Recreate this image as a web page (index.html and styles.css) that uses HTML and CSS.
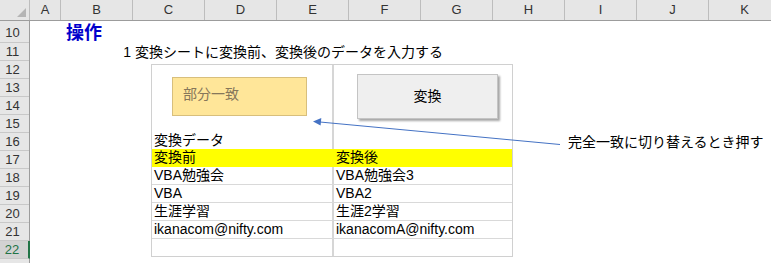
FILE: index.html
```html
<!DOCTYPE html>
<html lang="ja">
<head>
    <meta charset="UTF-8">
    <meta name="viewport" content="width=device-width, initial-scale=1.0">
    <title>変換シート</title>
    <link rel="stylesheet" href="styles.css">
</head>
<body>
    <div class="sheet">
        <div class="colheads">
            <div class="corner"><span class="tri"></span></div>
            <div class="ch narrow">A</div>
            <div class="ch">B</div>
            <div class="ch">C</div>
            <div class="ch">D</div>
            <div class="ch">E</div>
            <div class="ch">F</div>
            <div class="ch">G</div>
            <div class="ch">H</div>
            <div class="ch">I</div>
            <div class="ch">J</div>
            <div class="ch">K</div>
        </div>
        <div class="body">
            <div class="rownums">
                <div class="rn tall">10</div>
                <div class="rn">11</div>
                <div class="rn">12</div>
                <div class="rn">13</div>
                <div class="rn">14</div>
                <div class="rn">15</div>
                <div class="rn">16</div>
                <div class="rn">17</div>
                <div class="rn">18</div>
                <div class="rn">19</div>
                <div class="rn">20</div>
                <div class="rn">21</div>
                <div class="rn active">22</div>
                <div class="rn"></div>
            </div>
            <div class="cells">
                <div class="row tall"><div class="cell col-b title">操作</div></div>
                <div class="row">
                    <div class="cell col-b num">1</div>
                    <div class="cell col-c">変換シートに変換前、変換後のデータを入力する</div>
                </div>
                <div class="row"></div>
                <div class="row"></div>
                <div class="row"></div>
                <div class="row"></div>
                <div class="row"><div class="cell col-i note">完全一致に切り替えるとき押す</div></div>
                <div class="row"></div>
                <div class="row"></div>
                <div class="row"></div>
                <div class="row"></div>
                <div class="row"></div>
                <div class="row"></div>
                <div class="row"></div>

                <!-- pasted picture of the conversion table -->
                <div class="picture">
                    <div class="pic-top">
                        <div class="pc left top-left">
                            <div class="shape-partial">部分一致</div>
                            <div class="pic-label">変換データ</div>
                        </div>
                        <div class="pc">
                            <div class="shape-button">変換</div>
                        </div>
                    </div>
                    <div class="pic-row head">
                        <div class="pc left">変換前</div>
                        <div class="pc">変換後</div>
                    </div>
                    <div class="pic-row">
                        <div class="pc left">VBA勉強会</div>
                        <div class="pc">VBA勉強会3</div>
                    </div>
                    <div class="pic-row">
                        <div class="pc left">VBA</div>
                        <div class="pc">VBA2</div>
                    </div>
                    <div class="pic-row">
                        <div class="pc left">生涯学習</div>
                        <div class="pc">生涯2学習</div>
                    </div>
                    <div class="pic-row">
                        <div class="pc left">ikanacom@nifty.com</div>
                        <div class="pc">ikanacomA@nifty.com</div>
                    </div>
                    <div class="pic-row last">
                        <div class="pc left"></div>
                        <div class="pc"></div>
                    </div>
                </div>

                <svg class="arrow" width="741" height="242" viewBox="0 0 741 242">
                    <line x1="530" y1="123.5" x2="290" y2="101" stroke="#4472c4" stroke-width="1"/>
                    <polygon points="283,100.5 291.3,97 290.6,104.4" fill="#4472c4"/>
                </svg>
            </div>
        </div>
    </div>
</body>
</html>
```

FILE: styles.css
```css
* {
    box-sizing: border-box;
}
body {
    margin: 0;
    background: #ffffff;
    font-family: "Liberation Sans", "Noto Sans CJK JP", sans-serif;
    font-size: 14px;
    color: #000000;
    overflow: hidden;
}
.sheet {
    width: 771px;
    height: 263px;
    overflow: hidden;
}

/* column headers */
.colheads {
    display: flex;
    height: 21px;
    background: #e6e6e6;
    border-bottom: 1px solid #9c9c9c;
}
.corner {
    position: relative;
    width: 30px;
    flex: none;
    border-right: 1px solid #bdbdbd;
}
.tri {
    position: absolute;
    right: 3px;
    bottom: 3px;
    width: 0;
    height: 0;
    border-left: 9px solid transparent;
    border-bottom: 9px solid #b5b5b5;
}
.ch {
    width: 72px;
    flex: none;
    border-right: 1px solid #bdbdbd;
    text-align: center;
    font-size: 13px;
    line-height: 20px;
    color: #333333;
}
.ch.narrow {
    width: 31px;
}

/* row headers + cells */
.body {
    display: flex;
}
.rownums {
    width: 30px;
    flex: none;
    background: #e6e6e6;
    border-right: 1px solid #9c9c9c;
}
.rn {
    height: 18px;
    border-bottom: 1px solid #c8c8c8;
    text-align: center;
    font-size: 13px;
    line-height: 18px;
    padding-right: 4px;
    color: #333333;
}
.rn.tall {
    height: 22px;
    line-height: 24px;
}
.rn.active {
    background: #d2d2d2;
    color: #217346;
    border-right: 2px solid #217346;
    margin-right: -1px;
}
.cells {
    position: relative;
    flex: 1;
}
.row {
    display: grid;
    grid-template-columns: 31px repeat(10, 72px);
    height: 18px;
}
.row.tall {
    height: 22px;
}
.cell {
    white-space: nowrap;
    line-height: 18px;
    padding: 0 2px;
}
.col-b { grid-column: 2; }
.col-c { grid-column: 3; }
.col-i { grid-column: 9; }
.title {
    color: #0000cc;
    font-weight: bold;
    font-size: 18px;
    line-height: 25px;
    padding-left: 5px;
}
.num {
    text-align: right;
}
.note {
    padding-left: 3px;
}

/* pasted picture */
.picture {
    position: absolute;
    left: 121px;
    top: 43px;
    width: 362px;
    height: 193px;
    background: #ffffff;
    border: 1px solid #d0d0d0;
}
.pic-top,
.pic-row {
    display: grid;
    grid-template-columns: 182px 1fr;
}
.pic-top {
    height: 84px;
}
.pic-row {
    height: 18px;
    border-bottom: 1px solid #d9d9d9;
}
.pic-row.head {
    background: #ffff00;
    border-bottom: none;
}
.pic-row.last {
    height: 17px;
    border-bottom: none;
}
.pc {
    white-space: nowrap;
    line-height: 17px;
    padding-left: 2px;
}
.pc.left {
    border-right: 2px solid #d6d6d6;
}
.pic-row.head .pc.left {
    border-right-color: transparent;
}
.top-left {
    display: flex;
    flex-direction: column;
    justify-content: space-between;
    padding-left: 0;
}
.shape-partial {
    width: 135px;
    height: 39px;
    margin: 12px 0 0 20px;
    background: #ffe699;
    border: 1px solid #d8bf7c;
    color: #86775a;
    padding-left: 10px;
    line-height: 33px;
}
.pic-label {
    line-height: 18px;
    padding-left: 2px;
}
.shape-button {
    width: 141px;
    height: 45px;
    margin: 9px 0 0 21px;
    background: #efefef;
    border: 1px solid #c4c4c4;
    box-shadow: 2px 2px 2px rgba(0, 0, 0, 0.35);
    text-align: center;
    line-height: 42px;
}

.arrow {
    position: absolute;
    left: 0;
    top: 0;
    pointer-events: none;
}
```
